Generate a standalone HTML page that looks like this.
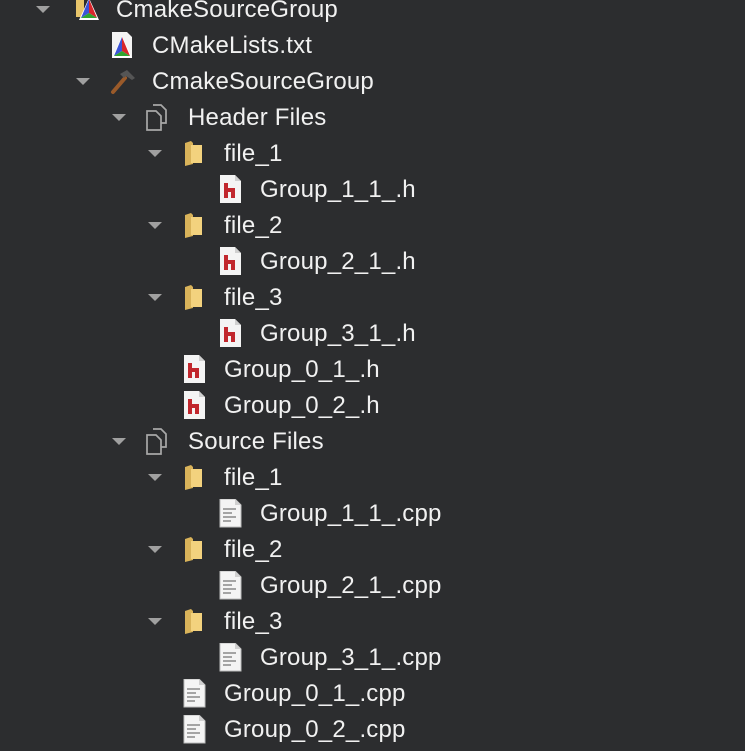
<!DOCTYPE html>
<html><head><meta charset="utf-8"><style>
html,body{margin:0;padding:0;background:#2c2d2f;width:745px;height:751px;overflow:hidden}
.r{position:absolute;height:36px;left:0;right:0}
.t{position:absolute;top:5px;line-height:36px;font:24px "Liberation Sans",sans-serif;letter-spacing:0.2px;color:#f1f1f1;white-space:nowrap}
.a{position:absolute;top:15px;width:0;height:0;border-left:7px solid transparent;border-right:7px solid transparent;border-top:7px solid #a0a0a0}
svg{position:absolute}
</style></head><body>
<svg width="0" height="0" style="position:absolute"><defs>
<g id="fold"><path d="M1 3 L7 1 L9 3 L9 24 L1 26 Z" fill="#d9b35a"/><path d="M7 5 H18 V23 H7 Z" fill="#f3d27e"/></g>
<g id="h"><path d="M1 0 H16 L22 6 V28 H1 Z" fill="#f4f4f4"/><path d="M16 0 V6 H22" fill="#d0d0d0"/><path d="M5 8 H9 V13 H16 V23 H12 V17 H9 V23 H5 Z" fill="#c1272d"/></g>
<g id="cpp"><path d="M1 0 H16 L22 6 V28 H1 Z" fill="#f4f4f4" stroke="#bdbdbd" stroke-width="1"/><path d="M16 0 V6 H22" fill="#d0d0d0"/><path d="M4 10 H17 M4 14 H13 M4 18 H17 M4 22 H12" stroke="#8a8a8a" stroke-width="1.5"/></g>
<g id="pages" fill="none" stroke="#a8a8a8" stroke-width="1.7"><path d="M7 1 H15 L20 6 V19 H15"/><path d="M1 7 H10 L15 12 V26 H1 Z"/></g>
<g id="cm"><path d="M11 2 L21 24 H1 Z" fill="#fff"/><path d="M11 3 L3 22 L11 17 Z" fill="#3b54d8"/><path d="M11 3 L19 22 L11 17 Z" fill="#d8262c"/><path d="M3 22 H19 L11 17 Z" fill="#2ea42e"/></g>
</defs></svg>

<div class="r" style="top:-9px"><div class="a" style="left:36px"></div><svg style="left:74px;top:4px" width="30" height="28"><path d="M2 0 H10 V22 H2 Z" fill="#e8c56b"/><use href="#cm" x="4" y="1"/></svg><div class="t" style="left:116px">CmakeSourceGroup</div></div>
<div class="r" style="top:27px"><svg style="left:111px;top:5px" width="24" height="28"><path d="M1 0 H16 L21 5 V26 H1 Z" fill="#f4f4f4"/><use href="#cm" x="0" y="2"/></svg><div class="t" style="left:152px">CMakeLists.txt</div></div>
<div class="r" style="top:63px"><div class="a" style="left:76px"></div><svg style="left:110px;top:5px" width="28" height="28"><path d="M3 24 L15 10" stroke="#9a5a2a" stroke-width="4" stroke-linecap="round"/><path d="M10 6 L17 2 L25 10 L22 12 L16 8 L14 10 Z" fill="#555"/></svg><div class="t" style="left:152px">CmakeSourceGroup</div></div>
<div class="r" style="top:99px"><div class="a" style="left:112px"></div><svg style="left:146px;top:5px" width="24" height="30"><use href="#pages"/></svg><div class="t" style="left:188px">Header Files</div></div>
<div class="r" style="top:135px"><div class="a" style="left:148px"></div><svg style="left:184px;top:5px" width="20" height="28"><use href="#fold"/></svg><div class="t" style="left:224px">file_1</div></div>
<div class="r" style="top:171px"><svg style="left:219px;top:4px" width="24" height="30"><use href="#h"/></svg><div class="t" style="left:260px">Group_1_1_.h</div></div>
<div class="r" style="top:207px"><div class="a" style="left:148px"></div><svg style="left:184px;top:5px" width="20" height="28"><use href="#fold"/></svg><div class="t" style="left:224px">file_2</div></div>
<div class="r" style="top:243px"><svg style="left:219px;top:4px" width="24" height="30"><use href="#h"/></svg><div class="t" style="left:260px">Group_2_1_.h</div></div>
<div class="r" style="top:279px"><div class="a" style="left:148px"></div><svg style="left:184px;top:5px" width="20" height="28"><use href="#fold"/></svg><div class="t" style="left:224px">file_3</div></div>
<div class="r" style="top:315px"><svg style="left:219px;top:4px" width="24" height="30"><use href="#h"/></svg><div class="t" style="left:260px">Group_3_1_.h</div></div>
<div class="r" style="top:351px"><svg style="left:183px;top:4px" width="24" height="30"><use href="#h"/></svg><div class="t" style="left:224px">Group_0_1_.h</div></div>
<div class="r" style="top:387px"><svg style="left:183px;top:4px" width="24" height="30"><use href="#h"/></svg><div class="t" style="left:224px">Group_0_2_.h</div></div>
<div class="r" style="top:423px"><div class="a" style="left:112px"></div><svg style="left:146px;top:5px" width="24" height="30"><use href="#pages"/></svg><div class="t" style="left:188px">Source Files</div></div>
<div class="r" style="top:459px"><div class="a" style="left:148px"></div><svg style="left:184px;top:5px" width="20" height="28"><use href="#fold"/></svg><div class="t" style="left:224px">file_1</div></div>
<div class="r" style="top:495px"><svg style="left:219px;top:4px" width="24" height="30"><use href="#cpp"/></svg><div class="t" style="left:260px">Group_1_1_.cpp</div></div>
<div class="r" style="top:531px"><div class="a" style="left:148px"></div><svg style="left:184px;top:5px" width="20" height="28"><use href="#fold"/></svg><div class="t" style="left:224px">file_2</div></div>
<div class="r" style="top:567px"><svg style="left:219px;top:4px" width="24" height="30"><use href="#cpp"/></svg><div class="t" style="left:260px">Group_2_1_.cpp</div></div>
<div class="r" style="top:603px"><div class="a" style="left:148px"></div><svg style="left:184px;top:5px" width="20" height="28"><use href="#fold"/></svg><div class="t" style="left:224px">file_3</div></div>
<div class="r" style="top:639px"><svg style="left:219px;top:4px" width="24" height="30"><use href="#cpp"/></svg><div class="t" style="left:260px">Group_3_1_.cpp</div></div>
<div class="r" style="top:675px"><svg style="left:183px;top:4px" width="24" height="30"><use href="#cpp"/></svg><div class="t" style="left:224px">Group_0_1_.cpp</div></div>
<div class="r" style="top:711px"><svg style="left:183px;top:4px" width="24" height="30"><use href="#cpp"/></svg><div class="t" style="left:224px">Group_0_2_.cpp</div></div>
</body></html>
